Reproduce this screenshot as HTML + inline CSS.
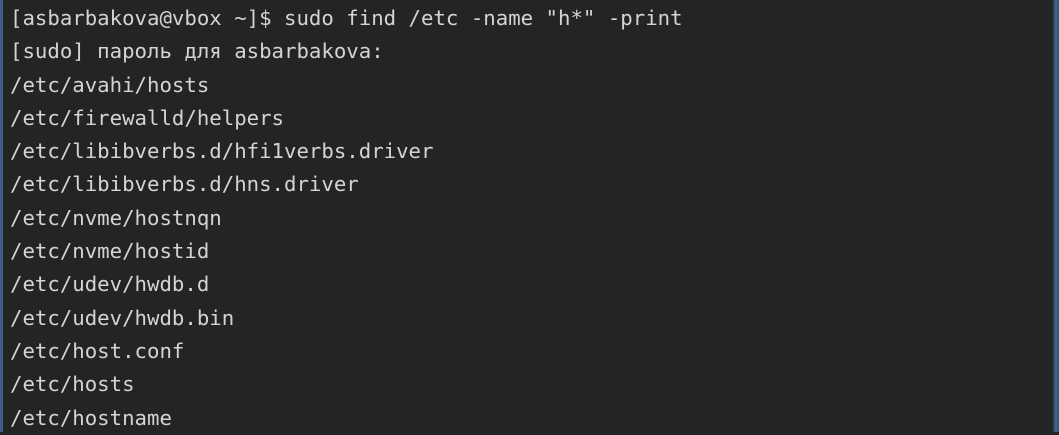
<!DOCTYPE html>
<html><head><meta charset="utf-8"><style>
html,body{margin:0;padding:0;}
body{width:1059px;height:432px;background:#242424;position:relative;overflow:hidden;}
.l{position:absolute;left:0;top:0;width:3px;height:432px;background:#3b5f86;}
.r{position:absolute;right:0;top:0;width:6px;height:432px;background:linear-gradient(90deg,#2a3a4c,#3d6a96,#2f4f70);}
pre{position:absolute;left:10px;top:2px;margin:0;font-family:"DejaVu Sans Mono","Liberation Mono",monospace;font-size:20.7px;line-height:33.3px;color:#d4d4d4;}
</style></head><body>
<div class="l"></div><div class="r"></div>
<pre>[asbarbakova@vbox ~]$ sudo find /etc -name "h*" -print
[sudo] пароль для asbarbakova:
/etc/avahi/hosts
/etc/firewalld/helpers
/etc/libibverbs.d/hfi1verbs.driver
/etc/libibverbs.d/hns.driver
/etc/nvme/hostnqn
/etc/nvme/hostid
/etc/udev/hwdb.d
/etc/udev/hwdb.bin
/etc/host.conf
/etc/hosts
/etc/hostname</pre>
</body></html>
